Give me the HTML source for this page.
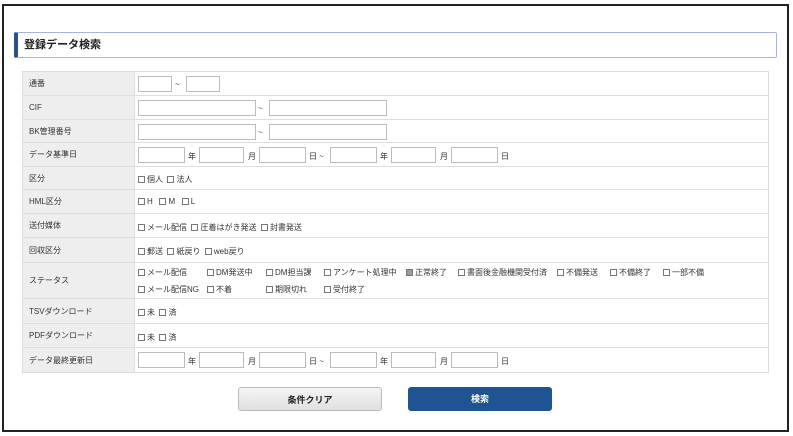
<!DOCTYPE html>
<html><head><meta charset="utf-8"><style>
*{box-sizing:border-box;margin:0;padding:0}
body{width:793px;height:436px;background:#fff;font-family:"Liberation Sans","Noto Sans CJK JP",sans-serif;font-size:8px;color:#333;position:relative;overflow:hidden}
.frame{position:absolute;left:2px;top:4px;width:787px;height:428px;border:2px solid #222}
.hdr{position:absolute;left:14px;top:32px;width:763px;height:26px;border:1px solid #aab4d8;border-left:4px solid #2b4f8f;border-radius:2px;font-weight:bold;font-size:11px;line-height:24px;padding-left:6px;color:#222}
.row{position:absolute;left:22px;width:747px;border:1px solid #ddd;border-top:none}
.lab{position:absolute;left:0;top:0;bottom:0;width:112px;background:#eee;border-right:1px solid #ddd;padding-left:6px;display:flex;align-items:center}
.a{position:absolute;white-space:nowrap}
.in{position:absolute;height:16px;border:1px solid #bbb;background:#fff}
.cb{display:inline-block;width:7px;height:7px;border:1px solid #777;vertical-align:-1px;margin-right:2px}
.btn{position:absolute;top:387px;width:144px;height:24px;border-radius:3px;font-weight:bold;font-size:9px;text-align:center;line-height:24px}
</style></head><body>
<div class="frame"></div>
<div class="hdr">登録データ検索</div>
<div class="row" style="top:71px;height:25px;border-top:1px solid #ddd"><div class="lab">通番</div></div>
<div class="in" style="left:138px;top:76px;width:34px"></div><div class="a" style="left:175px;top:80px">~</div><div class="in" style="left:186px;top:76px;width:34px"></div>
<div class="row" style="top:96px;height:24px"><div class="lab">CIF</div></div>
<div class="in" style="left:138px;top:100px;width:118px"></div><div class="a" style="left:258px;top:104px">~</div><div class="in" style="left:269px;top:100px;width:118px"></div>
<div class="row" style="top:120px;height:23px"><div class="lab">BK管理番号</div></div>
<div class="in" style="left:138px;top:124px;width:118px"></div><div class="a" style="left:258px;top:128px">~</div><div class="in" style="left:269px;top:124px;width:118px"></div>
<div class="row" style="top:143px;height:24px"><div class="lab">データ基準日</div></div>
<div class="in" style="left:138px;top:147px;width:47px"></div><div class="a" style="left:188px;top:151px">年</div>
<div class="in" style="left:199px;top:147px;width:45px"></div><div class="a" style="left:248px;top:151px">月</div>
<div class="in" style="left:259px;top:147px;width:47px"></div><div class="a" style="left:309px;top:151px">日 ~</div>
<div class="in" style="left:330px;top:147px;width:47px"></div><div class="a" style="left:380px;top:151px">年</div>
<div class="in" style="left:391px;top:147px;width:45px"></div><div class="a" style="left:440px;top:151px">月</div>
<div class="in" style="left:451px;top:147px;width:47px"></div><div class="a" style="left:501px;top:151px">日</div>
<div class="row" style="top:167px;height:23px"><div class="lab">区分</div></div>
<div class="a" style="left:138px;top:174px"><span class="cb"></span>個人 &nbsp;<span class="cb"></span>法人</div>
<div class="row" style="top:190px;height:24px"><div class="lab">HML区分</div></div>
<div class="a" style="left:138px;top:197px"><span class="cb"></span>H &nbsp;&nbsp;<span class="cb"></span>M &nbsp;&nbsp;<span class="cb"></span>L</div>
<div class="row" style="top:214px;height:24px"><div class="lab">送付媒体</div></div>
<div class="a" style="left:138px;top:222px"><span class="cb"></span>メール配信 &nbsp;<span class="cb"></span>圧着はがき発送 &nbsp;<span class="cb"></span>封書発送</div>
<div class="row" style="top:238px;height:25px"><div class="lab">回収区分</div></div>
<div class="a" style="left:138px;top:246px"><span class="cb"></span>郵送 &nbsp;<span class="cb"></span>紙戻り &nbsp;<span class="cb"></span>web戻り</div>
<div class="row" style="top:263px;height:36px"><div class="lab">ステータス</div></div>
<div class="a" style="left:138px;top:267px"><span class="cb"></span>メール配信</div>
<div class="a" style="left:207px;top:267px"><span class="cb"></span>DM発送中</div>
<div class="a" style="left:266px;top:267px"><span class="cb"></span>DM担当課</div>
<div class="a" style="left:324px;top:267px"><span class="cb"></span>アンケート処理中</div>
<div class="a" style="left:406px;top:267px"><span class="cb" style="background:#999"></span>正常終了</div>
<div class="a" style="left:458px;top:267px"><span class="cb"></span>書面後金融機関受付済</div>
<div class="a" style="left:557px;top:267px"><span class="cb"></span>不備発送</div>
<div class="a" style="left:610px;top:267px"><span class="cb"></span>不備終了</div>
<div class="a" style="left:663px;top:267px"><span class="cb"></span>一部不備</div>
<div class="a" style="left:138px;top:284px"><span class="cb"></span>メール配信NG</div>
<div class="a" style="left:207px;top:284px"><span class="cb"></span>不着</div>
<div class="a" style="left:266px;top:284px"><span class="cb"></span>期限切れ</div>
<div class="a" style="left:324px;top:284px"><span class="cb"></span>受付終了</div>
<div class="row" style="top:299px;height:25px"><div class="lab">TSVダウンロード</div></div>
<div class="a" style="left:138px;top:307px"><span class="cb"></span>未 &nbsp;<span class="cb"></span>済</div>
<div class="row" style="top:324px;height:24px"><div class="lab">PDFダウンロード</div></div>
<div class="a" style="left:138px;top:332px"><span class="cb"></span>未 &nbsp;<span class="cb"></span>済</div>
<div class="row" style="top:348px;height:25px"><div class="lab">データ最終更新日</div></div>
<div class="in" style="left:138px;top:352px;width:47px"></div><div class="a" style="left:188px;top:356px">年</div>
<div class="in" style="left:199px;top:352px;width:45px"></div><div class="a" style="left:248px;top:356px">月</div>
<div class="in" style="left:259px;top:352px;width:47px"></div><div class="a" style="left:309px;top:356px">日 ~</div>
<div class="in" style="left:330px;top:352px;width:47px"></div><div class="a" style="left:380px;top:356px">年</div>
<div class="in" style="left:391px;top:352px;width:45px"></div><div class="a" style="left:440px;top:356px">月</div>
<div class="in" style="left:451px;top:352px;width:47px"></div><div class="a" style="left:501px;top:356px">日</div>
<div class="btn" style="left:238px;background:linear-gradient(#f4f4f4,#e0e0e0);border:1px solid #bbb;color:#222">条件クリア</div>
<div class="btn" style="left:408px;background:#1f5492;color:#fff">検索</div>
</body></html>
